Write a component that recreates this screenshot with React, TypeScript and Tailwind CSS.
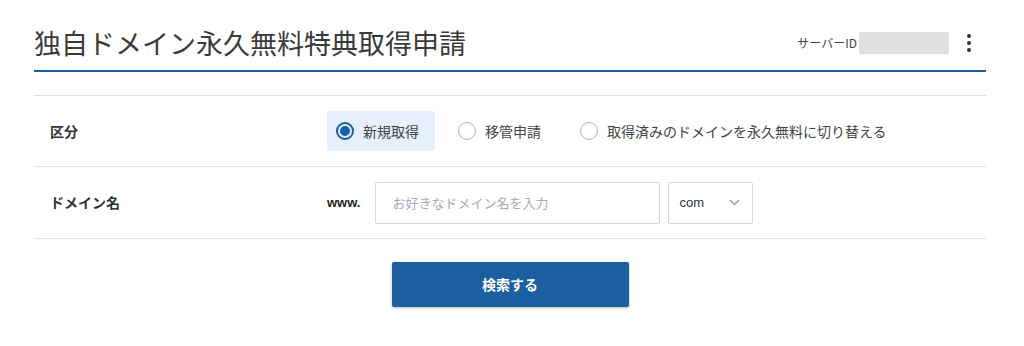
import { useState } from "react"

const options = ["新規取得", "移管申請", "取得済みのドメインを永久無料に切り替える"]

export default function App() {

  const [kind, setKind] = useState(0)
  const [domain, setDomain] = useState("")

  return (

    <main className="min-h-screen bg-white px-[34px] pr-[38px] text-[#333] font-['Noto_Sans_CJK_JP','Noto_Sans',sans-serif]">

      {/* HEADER */}

      <header className="flex items-center justify-between border-b-2 border-[#1a5fa3] pt-[25px] pb-[9px]">

        <h1 className="text-[27px] leading-[36px] font-normal text-[#3a3a3a]">
          独自ドメイン永久無料特典取得申請
        </h1>

        <div className="flex items-center pr-[15px]">
          <span className="text-[12px] text-[#444]">サーバーID</span>
          <div className="ml-[2px] h-[22px] w-[90px] bg-[#e0e0e0]" />
          <button className="ml-[18px] flex flex-col items-center gap-[3px]">
            <span className="block h-[4px] w-[4px] rounded-full bg-[#333]" />
            <span className="block h-[4px] w-[4px] rounded-full bg-[#333]" />
            <span className="block h-[4px] w-[4px] rounded-full bg-[#333]" />
          </button>
        </div>

      </header>

      {/* FORM */}

      <section className="mt-[23px] border-t border-b border-[#d9e1ea]">

        <div className="flex items-center h-[71px] border-b border-[#d9e1ea]">

          <div className="w-[293px] pl-[16px] text-[14px] font-bold">
            区分
          </div>

          <div className="flex items-center gap-[14px]">

            {options.map((opt, i) => (

              <label
                key={i}
                onClick={() => setKind(i)}
                className={`flex items-center h-[40px] pl-[9px] pr-[16px] rounded-[2px] cursor-pointer ${kind === i ? "bg-[#e6f0fa]" : ""}`}
              >

                {kind === i ? (
                  <span className="flex items-center justify-center h-[18px] w-[18px] rounded-full border-2 border-[#1a5fa3]">
                    <span className="block h-[10px] w-[10px] rounded-full bg-[#1a5fa3]" />
                  </span>
                ) : (
                  <span className="block h-[18px] w-[18px] rounded-full border-[1.5px] border-[#a9b9c9] bg-white" />
                )}

                <span className="ml-[9px] text-[14px] text-[#444]">
                  {opt}
                </span>

              </label>

            ))}

          </div>

        </div>

        <div className="flex items-center h-[71px]">

          <div className="w-[293px] pl-[16px] text-[14px] font-bold">
            ドメイン名
          </div>

          <span className="text-[13px] font-bold font-['Liberation_Sans',sans-serif] text-[#222]">
            www.
          </span>

          <input
            value={domain}
            onChange={(e) => setDomain(e.target.value)}
            placeholder="お好きなドメイン名を入力"
            className="ml-[15px] h-[42px] w-[285px] rounded-[2px] border border-[#cfd9e3] px-[16px] text-[13px] text-[#333] placeholder:text-[#a3abb3] outline-none"
          />

          <div className="ml-[8px] flex items-center justify-between h-[42px] w-[85px] rounded-[2px] border border-[#cfd9e3] pl-[10px] pr-[12px]">
            <span className="text-[13px] font-['Liberation_Sans',sans-serif] text-[#333]">com</span>
            <svg width="11" height="7" viewBox="0 0 11 7" fill="none">
              <path d="M1 1l4.5 4.5L10 1" stroke="#8fa3b8" strokeWidth="1.5" />
            </svg>
          </div>

        </div>

      </section>

      {/* BUTTON */}

      <div className="flex justify-center mt-[23px]">
        <button className="h-[45px] w-[237px] rounded-[2px] bg-[#1c5fa1] text-white text-[14px] font-bold shadow-[0_1px_3px_rgba(0,0,0,0.3)]">
          検索する
        </button>
      </div>

    </main>

  )
}
